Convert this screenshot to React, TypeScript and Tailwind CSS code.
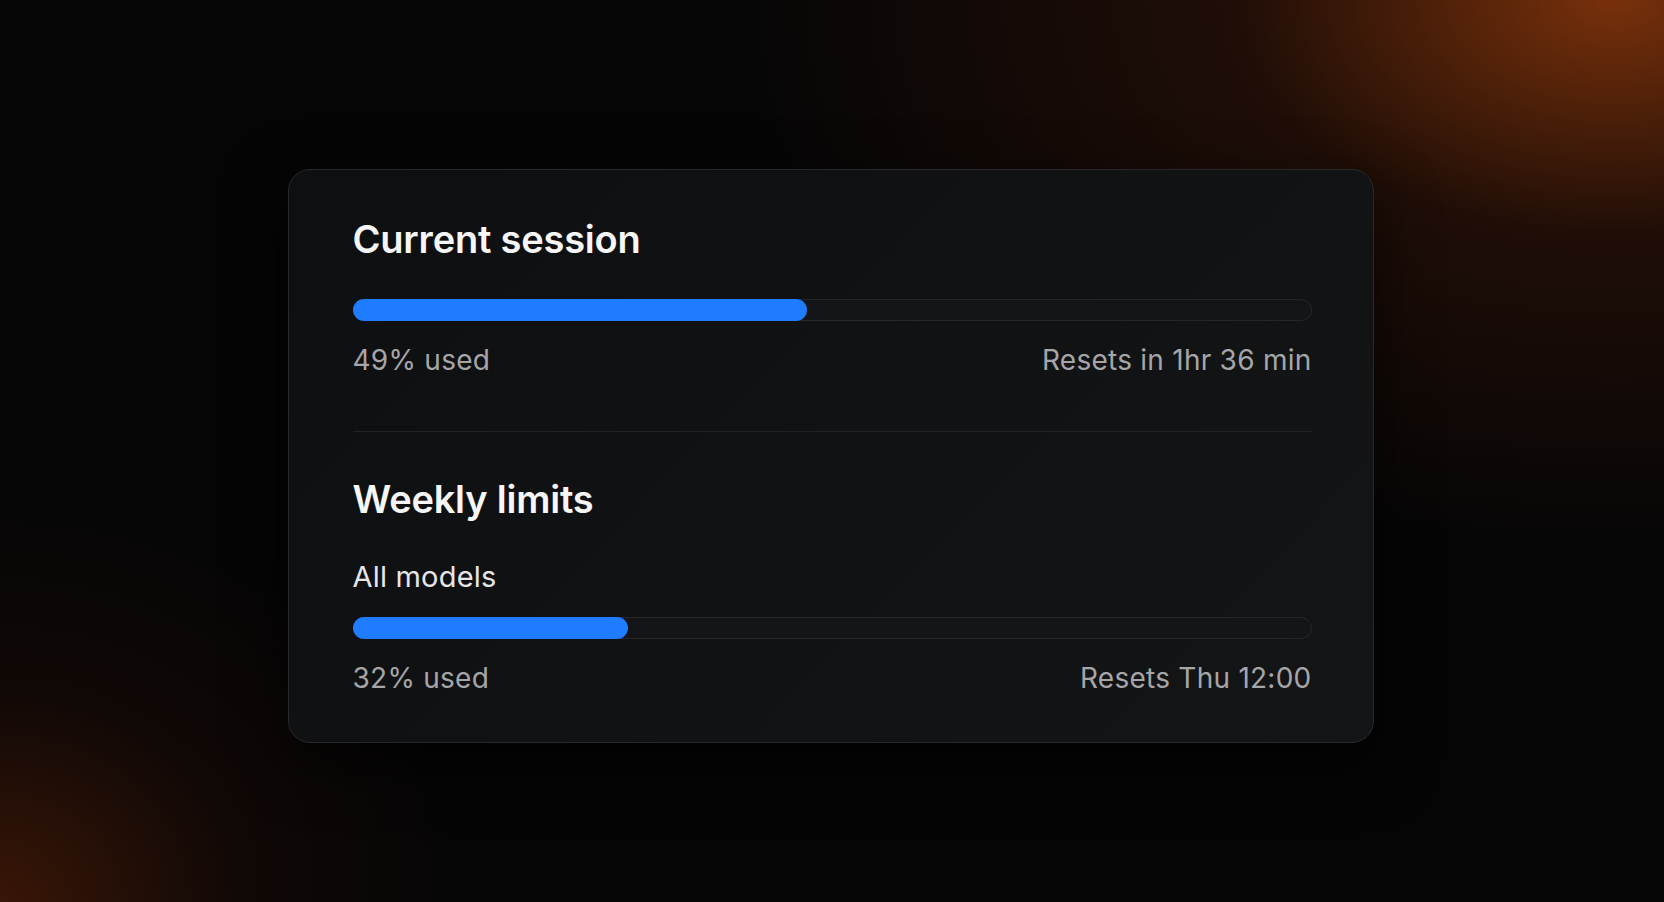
import React from 'react'

type Usage = {
  percent: number
  fill: number
  reset: string
}

function UsageBar({ percent, fill, reset }: Usage) {
  return (
    <div>
      <div className="h-[22px] w-full rounded-full border border-[#25262a] bg-[#141518]">
        <div
          className="-m-px h-[22px] rounded-full bg-[#1f7cff]"
          style={{ width: `calc(${fill}% + 2px)` }}
        />
      </div>
      <div className="mt-[23px] flex items-center justify-between text-[28px] leading-[32px] tracking-[0.25px] text-[#a6a6a8]">
        <span>{percent}% used</span>
        <span>{reset}</span>
      </div>
    </div>
  )
}

export default function App() {
  return (
    <div
      className="flex h-[902px] w-full items-center justify-center bg-[#050506] bg-[radial-gradient(ellipse_900px_560px_at_97%_0%,rgba(140,56,12,0.85)_0%,rgba(80,30,8,0.35)_42%,transparent_100%),radial-gradient(ellipse_480px_420px_at_0%_100%,rgba(100,36,8,0.55)_0%,rgba(50,18,5,0.25)_50%,transparent_100%)]"
      style={{ fontFamily: 'Inter, "Noto Sans", sans-serif' }}
    >
      {/* Usage card */}
      <div className="mt-[9px] -ml-[3px] w-[1086px] rounded-[22px] border border-[#28292c] bg-[linear-gradient(135deg,#0e0f11,#141517)] pt-12 pr-[61px] pb-[48px] pl-16 shadow-[0_20px_60px_rgba(0,0,0,0.6)]">
        <h2 className="text-[38px] leading-[43px] font-semibold tracking-[-0.2px] text-[#f6f6f6]">
          Current session
        </h2>
        <div className="mt-[38px]">
          <UsageBar percent={49} fill={47.3} reset="Resets in 1hr 36 min" />
        </div>

        <div className="mt-[55px] h-px bg-[#222326]" />

        <h2 className="mt-[46px] text-[38px] leading-[43px] font-semibold tracking-[-0.2px] text-[#f6f6f6]">
          Weekly limits
        </h2>
        <div className="mt-[40px] text-[29px] leading-[32px] tracking-[0.2px] text-[#e6e6e8]">All models</div>
        <div className="mt-[24px]">
          <UsageBar percent={32} fill={28.6} reset="Resets Thu 12:00" />
        </div>
      </div>
    </div>
  )
}
